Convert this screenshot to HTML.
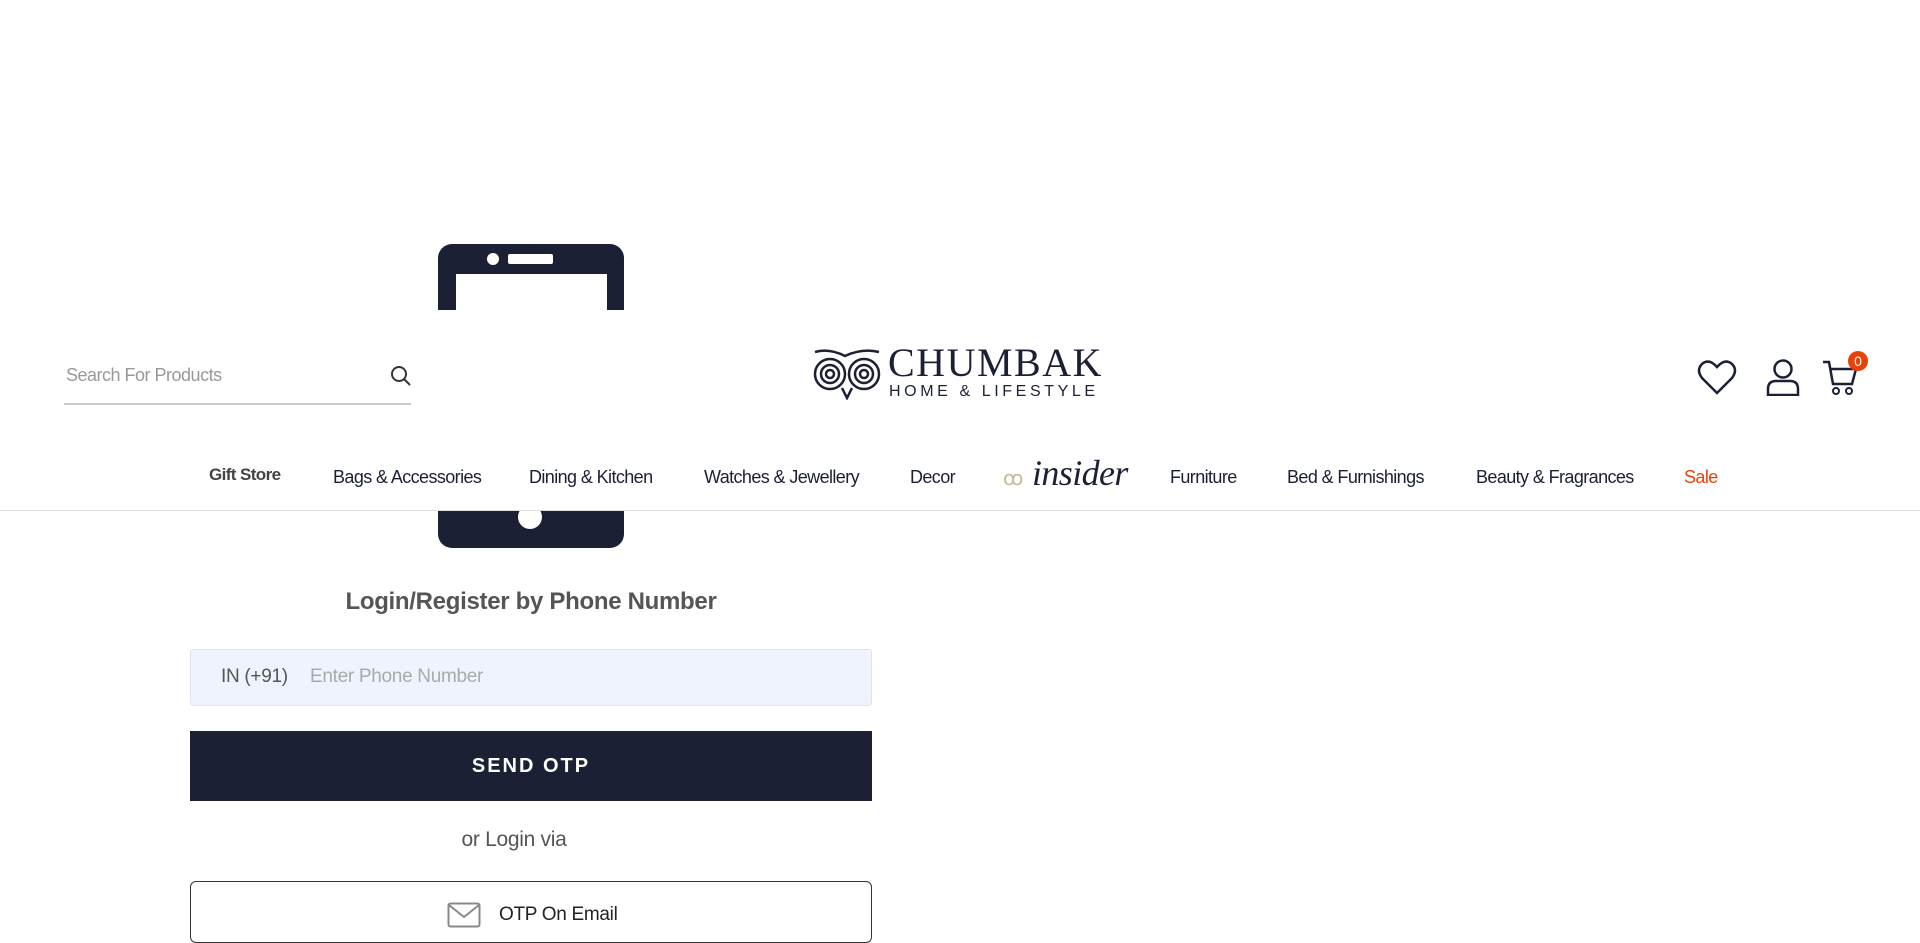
<!DOCTYPE html><html><head><meta charset="utf-8"><style>
body{margin:0;width:1920px;height:923px;overflow:hidden;background:#fff;font-family:"Liberation Sans",sans-serif;position:relative}
.a{position:absolute}
.hdr{position:absolute;left:0;top:310px;width:1920px;height:200px;background:#fff;border-bottom:1px solid #ddd}
.nav{position:absolute;top:467px;font-size:18px;color:#1b2034;white-space:nowrap;letter-spacing:-0.6px}
</style></head><body>
<svg class="a" style="left:438px;top:244px" width="186" height="304" viewBox="0 0 186 304">
<rect x="0" y="0" width="186" height="304" rx="14" fill="#1b2034"/>
<rect x="18" y="30" width="151" height="225" fill="#fff"/>
<circle cx="55" cy="15" r="6" fill="#fff"/>
<rect x="70" y="10" width="45" height="10" rx="2" fill="#fff"/>
<circle cx="92" cy="273" r="12" fill="#fff"/>
</svg>
<div class="a" style="left:0;top:588px;width:1062px;text-align:center;font-size:24px;font-weight:bold;color:#555;letter-spacing:-0.3px">Login/Register by Phone Number</div>
<div class="a" style="left:190px;top:649px;width:680px;height:55px;background:#eef3fd;border:1px solid #dde3ee;border-radius:3px"></div>
<div class="a" style="left:221px;top:666px;font-size:19px;color:#555;letter-spacing:-0.3px">IN (+91)</div>
<div class="a" style="left:310px;top:666px;font-size:19px;color:#aaa;letter-spacing:-0.3px">Enter Phone Number</div>
<div class="a" style="left:190px;top:731px;width:682px;height:70px;background:#1b2034;color:#fff;font-size:20px;font-weight:bold;letter-spacing:2px;text-align:center;line-height:70px">SEND OTP</div>
<div class="a" style="left:0;top:828px;width:1028px;text-align:center;font-size:21px;color:#555;letter-spacing:-0.3px">or Login via</div>
<div class="a" style="left:190px;top:881px;width:680px;height:60px;border:1px solid #333;border-radius:6px"></div>
<svg class="a" style="left:447px;top:902px" width="34" height="26"><rect x="1.5" y="1.5" width="31" height="23" rx="2" fill="none" stroke="#888" stroke-width="2"/><path d="M2 3L17 15L32 3" fill="none" stroke="#888" stroke-width="2"/></svg>
<div class="a" style="left:499px;top:904px;font-size:19px;color:#222;letter-spacing:-0.3px">OTP On Email</div>

<div class="hdr"></div>
<div class="a" style="left:66px;top:365px;font-size:18px;color:#999;letter-spacing:-0.5px">Search For Products</div>
<div class="a" style="left:64px;top:403px;width:347px;height:2px;background:#ccc"></div>
<svg class="a" style="left:390px;top:365px" width="22" height="22"><circle cx="9" cy="9" r="7" fill="none" stroke="#333" stroke-width="2"/><path d="M14 14L20 20" stroke="#333" stroke-width="2"/></svg>
<svg class="a" style="left:812px;top:348px" width="70" height="52" viewBox="0 0 70 52"><g fill="none" stroke="#1b2034" stroke-width="2.5"><path d="M3 4Q17 0 33 8Q50 0 67 4"/><circle cx="18" cy="26" r="15"/><circle cx="18" cy="26" r="9"/><circle cx="18" cy="26" r="4"/><circle cx="52" cy="26" r="15"/><circle cx="52" cy="26" r="9"/><circle cx="52" cy="26" r="4"/><path d="M30 40L35 50L40 40"/></g></svg>
<div class="a" style="left:888px;top:342px;font-family:'Liberation Serif',serif;font-size:40px;color:#1b2034;letter-spacing:1.5px;line-height:42px">CHUMBAK</div>
<div class="a" style="left:889px;top:383px;font-size:16px;color:#1b2034;letter-spacing:3.6px;line-height:18px">HOME &amp; LIFESTYLE</div>
<svg class="a" style="left:1697px;top:358px" width="40" height="38" viewBox="0 0 40 38"><path d="M20 35L5 20Q-1 12 5 6Q12 0 20 9Q28 0 35 6Q41 12 35 20Z" fill="none" stroke="#1b2034" stroke-width="2.5"/></svg>
<svg class="a" style="left:1765px;top:358px" width="36" height="38"><circle cx="18" cy="11" r="8.5" fill="none" stroke="#1b2034" stroke-width="2.5"/><path d="M3 37V31Q3 23 11 23H25Q33 23 33 31V37Z" fill="none" stroke="#1b2034" stroke-width="2.5"/></svg>
<svg class="a" style="left:1822px;top:358px" width="36" height="38"><path d="M1 4H7L11 26H30L34 11H9" fill="none" stroke="#1b2034" stroke-width="2.5"/><circle cx="14" cy="33" r="3" fill="none" stroke="#1b2034" stroke-width="2"/><circle cx="27" cy="33" r="3" fill="none" stroke="#1b2034" stroke-width="2"/></svg>
<div class="a" style="left:1848px;top:351px;width:20px;height:20px;border-radius:50%;background:#e8420b;color:#fff;font-size:14px;text-align:center;line-height:20px">0</div>
<div class="nav" style="left:209px;top:465px;font-weight:bold;font-size:17px;color:#444">Gift Store</div>
<div class="nav" style="left:333px">Bags &amp; Accessories</div>
<div class="nav" style="left:529px">Dining &amp; Kitchen</div>
<div class="nav" style="left:704px">Watches &amp; Jewellery</div>
<div class="nav" style="left:910px">Decor</div>
<div class="nav" style="left:1003px;top:466px;font-size:20px;color:#c9b99a">ꝏ</div>
<div class="nav" style="left:1032px;top:452px;font-family:'Liberation Serif',serif;font-style:italic;font-size:36px;color:#1b2034">insider</div>
<div class="nav" style="left:1170px">Furniture</div>
<div class="nav" style="left:1287px">Bed &amp; Furnishings</div>
<div class="nav" style="left:1476px">Beauty &amp; Fragrances</div>
<div class="nav" style="left:1684px;color:#e8420b">Sale</div>
</body></html>
